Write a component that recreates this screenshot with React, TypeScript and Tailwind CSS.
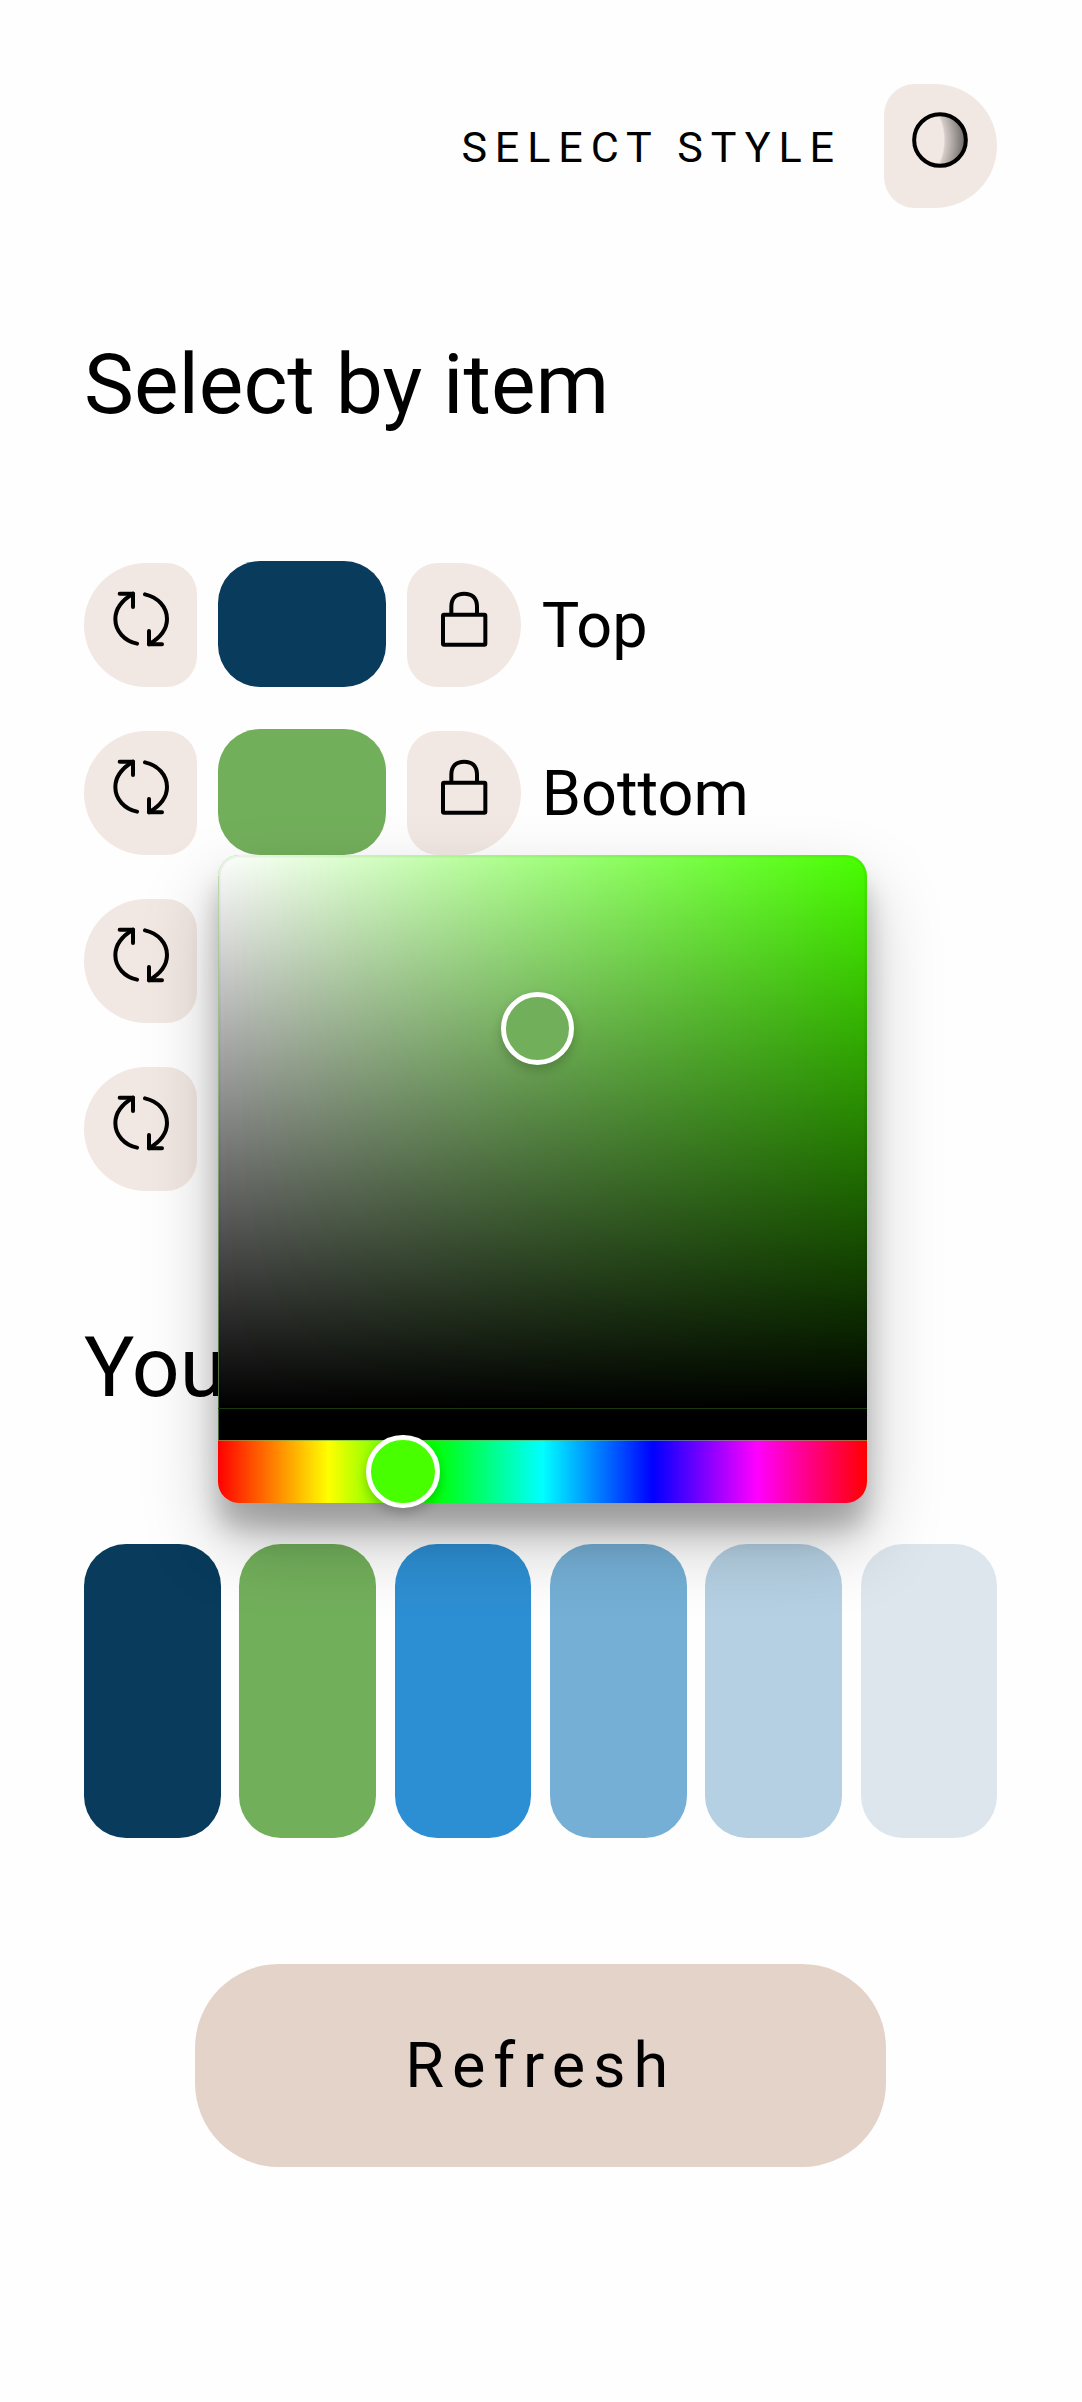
import React from "react";

const rows = [
  { label: "Top", swatch: "bg-[#083b5c]" },
  { label: "Bottom", swatch: "bg-[#72af5b]" },
  { label: "Shoes", swatch: "bg-[#2d8fd3]" },
  { label: "Accent", swatch: "bg-[#75afd5]" },
];

const palette = [
  "bg-[#083b5c]",
  "bg-[#72af5b]",
  "bg-[#2d8fd3]",
  "bg-[#75afd5]",
  "bg-[#b5d0e3]",
  "bg-[#dee6ed]",
];

function RefreshIcon() {
  return (
    <svg viewBox="0 0 168 168" className="size-14" fill="none" stroke="#000" strokeWidth="12" strokeLinecap="round" strokeLinejoin="round">
      <path d="M72 158C34 150 7 120 7 84C7 50 26 28 60 8" />
      <path d="M20 8H60V48" />
      <path d="M96 10C134 18 162 48 162 84C162 116 142 140 108 160" />
      <path d="M108 120V160H147" />
    </svg>
  );
}

function LockIcon() {
  return (
    <svg viewBox="0 0 168 168" className="size-14" fill="none" stroke="#000" strokeWidth="12" strokeLinejoin="round">
      <rect x="21" y="71" width="127" height="90" rx="3" />
      <path d="M46 71V47C46 20 62 8 84.500 8C107 8 123 20 123 47V71" />
    </svg>
  );
}

function StyleIcon() {
  return (
    <svg viewBox="0 0 168 168" className="size-14" fill="none">
      <defs>
        <radialGradient id="shade" gradientUnits="userSpaceOnUse" cx="-73" cy="84" r="232">
          <stop offset="0.725" stopColor="#000" stopOpacity="0" />
          <stop offset="0.745" stopColor="#000" stopOpacity="0.12" />
          <stop offset="1" stopColor="#000" stopOpacity="0.55" />
        </radialGradient>
      </defs>
      <circle cx="84" cy="84" r="77.500" fill="url(#shade)" stroke="#000" strokeWidth="12" />
    </svg>
  );
}

function ColorPicker() {
  return (
    <div className="absolute top-full left-0 z-10 flex h-[648.4px] w-[649px] flex-col rounded-[21px] shadow-[0_37px_73.5px_rgba(0,0,0,0.25),0_26px_26px_rgba(0,0,0,0.22)]">
      <div className="relative grow rounded-t-[21px] border-b-[31px] border-black bg-[#48ff00] bg-[linear-gradient(to_top,#000,rgba(0,0,0,0)),linear-gradient(to_right,#fff,rgba(255,255,255,0))] bg-origin-padding shadow-[inset_0_0_0_2.600px_rgba(0,0,0,0.05)]">
        <div className="absolute top-[21px] bottom-[-31px] left-0 w-px bg-[#8fd075]/50" />
        <div className="absolute inset-x-0 bottom-0 h-px bg-[#163a0a]" />
        <div className="absolute top-[137px] left-[282.500px] size-[73.500px] rounded-full border-[5px] border-white bg-[#72af5b] shadow-[0_5px_10.500px_rgba(0,0,0,0.2)]" />
      </div>
      <div className="relative h-[63px] shrink-0 rounded-b-[21px] bg-[linear-gradient(to_right,#f00_0%,#ff0_17%,#0f0_33%,#0ff_50%,#00f_67%,#f0f_83%,#f00_100%)]">
        <div className="absolute inset-x-0 top-0 h-px bg-[#72af5b]/60" />
        <div className="absolute top-[-5px] left-[148px] size-[73.500px] rounded-full border-[5px] border-white bg-[#48ff00] shadow-[0_5px_10.500px_rgba(0,0,0,0.2)]" />
      </div>
    </div>
  );
}

export default function App() {
  return (
    <main className="flex h-[2402px] w-[1082px] flex-col overflow-hidden bg-[#fefefe] pt-[84px] pr-[84.700px] pl-[84px] font-['Roboto',sans-serif] text-black">
      <header className="flex h-[123.500px] items-center justify-end gap-[42px]">
        <span className="pt-[3px] text-[43.100px] leading-[49px] tracking-[7.875px]">SELECT STYLE</span>
        <button className="flex h-full w-[113.400px] justify-center rounded-l-[31px] rounded-r-[62px] bg-[#f2e8e3] pt-7 pr-[1px]">
          <StyleIcon />
        </button>
      </header>

      <h1 className="mt-[127.500px] text-[84px] leading-[100px]">Select by item</h1>

      <section className="mt-[125.500px] flex flex-col gap-[42px]">
        {rows.map((row, i) => (
          <div key={row.label} className="flex h-[126px] items-end gap-[21px]">
            <button className="flex h-[123.500px] w-[113.400px] justify-center rounded-l-[62px] rounded-r-[31px] bg-[#f2e8e3] pt-7">
              <RefreshIcon />
            </button>
            <div className={`relative h-[126px] w-[168px] rounded-[42px] ${row.swatch}`}>
              {i === 1 && <ColorPicker />}
            </div>
            <button className="flex h-[123.500px] w-[113.400px] justify-center rounded-l-[31px] rounded-r-[62px] bg-[#f2e8e3] pt-7">
              <LockIcon />
            </button>
            <span className="flex h-[126px] items-center pt-[4px] text-[63px] leading-[74px]">{row.label}</span>
          </div>
        ))}
      </section>

      <h2 className="mt-[127px] text-[84px] leading-[100px]">Your palette</h2>

      <section className="mt-[126px] flex justify-between">
        {palette.map((color) => (
          <div key={color} className={`h-[294px] w-[136.500px] rounded-[42px] ${color}`} />
        ))}
      </section>

      <button className="mt-[126px] h-[203.700px] w-[691px] self-center rounded-[84px] bg-[#e4d3c9] pt-[2px] text-[63px] tracking-[7.875px]">
        Refresh
      </button>
    </main>
  );
}
